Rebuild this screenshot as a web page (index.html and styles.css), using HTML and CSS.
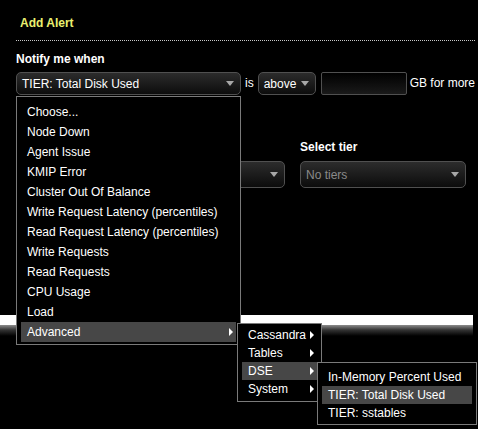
FILE: index.html
```html
<!DOCTYPE html>
<html lang="en">
<head>
    <meta charset="UTF-8">
    <meta name="viewport" content="width=device-width, initial-scale=1.0">
    <title>Add Alert</title>
    <link rel="stylesheet" href="styles.css">
</head>
<body>
    <div class="alert-form">
        <h2 class="title">Add Alert</h2>
        <div class="divider"></div>

        <div class="label">Notify me when</div>
        <div class="rule-row">
            <div class="rule-select">
                <div class="select select-metric">
                    <span>TIER: Total Disk Used</span>
                    <i class="caret"></i>
                </div>

                <!-- open metric menu -->
                <ul class="menu menu-main">
                    <li>Choose...</li>
                    <li>Node Down</li>
                    <li>Agent Issue</li>
                    <li>KMIP Error</li>
                    <li>Cluster Out Of Balance</li>
                    <li>Write Request Latency (percentiles)</li>
                    <li>Read Request Latency (percentiles)</li>
                    <li>Write Requests</li>
                    <li>Read Requests</li>
                    <li>CPU Usage</li>
                    <li>Load</li>
                    <li class="has-sub active">
                        Advanced <i class="sub-arrow"></i>
                        <ul class="menu menu-advanced">
                            <li class="has-sub">Cassandra <i class="sub-arrow"></i></li>
                            <li class="has-sub">Tables <i class="sub-arrow"></i></li>
                            <li class="has-sub active">
                                DSE <i class="sub-arrow"></i>
                                <ul class="menu menu-dse">
                                    <li>In-Memory Percent Used</li>
                                    <li class="active">TIER: Total Disk Used</li>
                                    <li>TIER: sstables</li>
                                </ul>
                            </li>
                            <li class="has-sub">System <i class="sub-arrow"></i></li>
                        </ul>
                    </li>
                </ul>
            </div>
            <span class="word">is</span>
            <div class="select select-op">
                <span>above</span>
                <i class="caret"></i>
            </div>
            <input class="threshold" type="text">
            <span class="word word-unit">GB for more</span>
        </div>

        <div class="scope-row">
            <!-- left column sits under the open menu -->
            <div class="scope scope-dc">
                <div class="label"></div>
                <div class="select select-tall">
                    <span></span>
                    <i class="caret"></i>
                </div>
            </div>
            <div class="scope scope-tier">
                <div class="label">Select tier</div>
                <div class="select select-tall">
                    <span class="placeholder">No tiers</span>
                    <i class="caret"></i>
                </div>
            </div>
        </div>

        <div class="footer-bar"></div>
    </div>
</body>
</html>
```

FILE: styles.css
```css
html {
    background: #000;
}

body {
    margin: 0;
    min-height: 100vh;
    background: #000;
    color: #fff;
    font-family: "Liberation Sans", Arial, sans-serif;
    font-size: 12px;
}

.alert-form {
    padding: 0 3px 0 16px;
}

.title {
    margin: 0;
    padding: 15px 0 0 4px;
    height: 16px;
    line-height: 16px;
    font-size: 12px;
    font-weight: bold;
    color: #eaf070;
}

.divider {
    margin-top: 9px;
    border-top: 1px dotted #c8c8c8;
}

.label {
    margin-top: 10px;
    height: 16px;
    line-height: 16px;
    font-weight: bold;
    white-space: nowrap;
}

.rule-row {
    display: flex;
    align-items: center;
    margin-top: 5px;
    height: 23px;
    white-space: nowrap;
}

.rule-select {
    position: relative;
}

.word {
    margin: 0 4px;
    line-height: 23px;
}

.word-unit {
    margin-left: 3px;
}

.select {
    box-sizing: border-box;
    display: flex;
    align-items: center;
    justify-content: space-between;
    height: 23px;
    padding: 0 6px 0 5px;
    border: 1px solid #505050;
    border-radius: 5px;
    background: linear-gradient(#2c2c2c, #0c0c0c);
    color: #fff;
}

.select-metric {
    width: 225px;
}

.select-op {
    width: 58px;
    flex-shrink: 0;
}

.caret {
    width: 0;
    height: 0;
    border-left: 4px solid transparent;
    border-right: 4px solid transparent;
    border-top: 5px solid #a8a8a8;
}

.threshold {
    box-sizing: border-box;
    flex-shrink: 0;
    width: 86px;
    height: 23px;
    margin: 0 0 0 5px;
    border: 1px solid #505050;
    border-radius: 2px;
    background: linear-gradient(#000, #1a1a1a);
    color: #fff;
}

.scope-row {
    display: flex;
    gap: 15px;
    margin-top: 44px;
}

.scope-row .label {
    margin-top: 0;
}

.scope-dc {
    width: 269px;
}

.scope-tier {
    width: 166px;
}

.select-tall {
    height: 27px;
    margin-top: 6px;
}

.placeholder {
    color: #8a8a8a;
}

.footer-bar {
    margin: 127px 2px 0 -16px;
    height: 21px;
    background: linear-gradient(#fff 0, #fff 10px, #8c8c8c 10px, #333 15px, #000 21px);
}

/* dropdown menus */

.menu {
    position: absolute;
    z-index: 10;
    list-style: none;
    margin: 0;
    background: #000;
    border: 1px solid #7a7a7a;
}

.menu li {
    position: relative;
    white-space: nowrap;
}

.menu li.active {
    background: #474747;
}

.menu-main {
    top: 24px;
    left: 0;
    width: 215px;
    padding: 5px 4px 2px;
}

.menu-main > li {
    height: 20px;
    line-height: 20px;
    padding-left: 6px;
}

.menu-advanced {
    top: 1px;
    left: calc(100% + 1px);
    width: 75px;
    padding: 2px 4px 3px;
}

.menu-advanced > li {
    height: 18px;
    line-height: 18px;
    padding-left: 6px;
}

.menu-dse {
    top: 0;
    left: 100%;
    width: 150px;
    padding: 5px 4px 2px;
}

.menu-dse > li {
    height: 18px;
    line-height: 18px;
    padding-left: 6px;
}

.sub-arrow {
    position: absolute;
    right: 3px;
    top: 50%;
    margin-top: -4px;
    width: 0;
    height: 0;
    border-top: 4px solid transparent;
    border-bottom: 4px solid transparent;
    border-left: 4px solid #fff;
}
```
